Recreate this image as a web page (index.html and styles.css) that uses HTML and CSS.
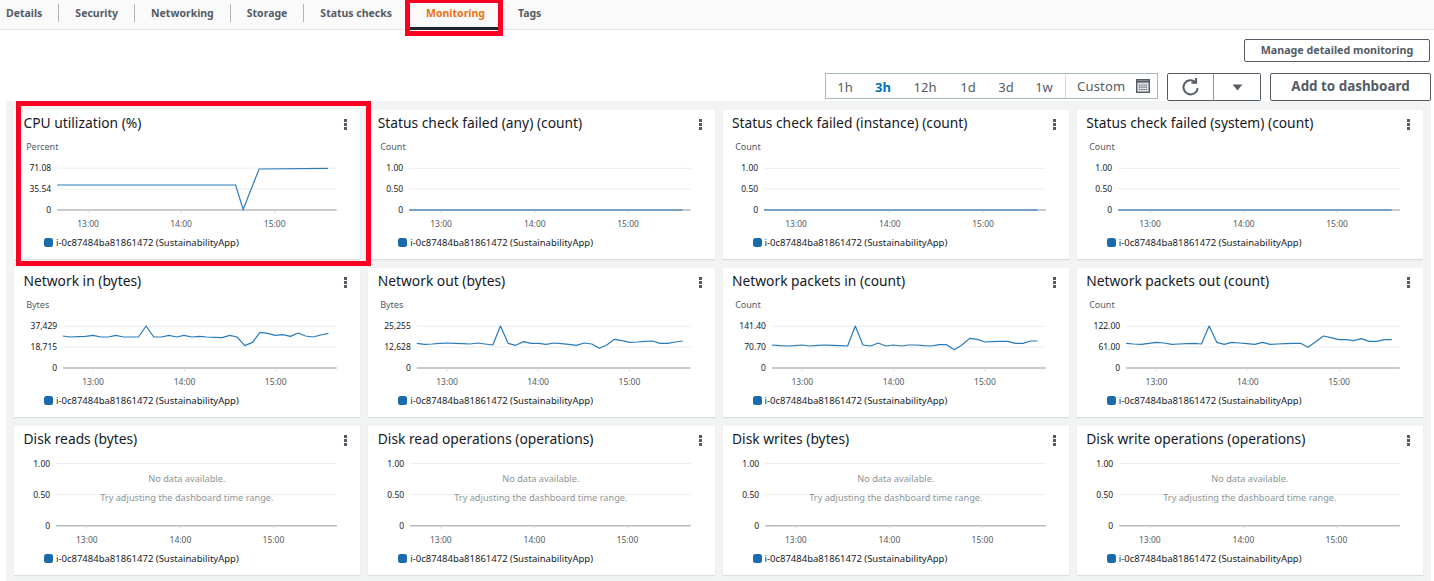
FILE: index.html
```html
<!DOCTYPE html>
<html lang="en">
<head>
<meta charset="utf-8">
<title>Monitoring</title>
<link rel="stylesheet" href="styles.css">
</head>
<body>
<nav class="tabs">
  <a class="tab first">Details</a>
  <a class="tab">Security</a>
  <a class="tab">Networking</a>
  <a class="tab">Storage</a>
  <a class="tab plain">Status checks</a>
  <a class="tab active">Monitoring</a>
  <a class="tab last">Tags</a>
</nav>
<div class="tab-mark"></div>
<section class="toolbar">
  <button class="btn manage">Manage detailed monitoring</button>
  <div class="controls">
    <div class="range">
      <span class="r r1">1h</span><span class="r r2 on">3h</span><span class="r r3">12h</span><span class="r r4">1d</span><span class="r r5">3d</span><span class="r r6">1w</span>
      <span class="custom">Custom
        <svg class="cal" viewBox="0 0 14 14"><rect class="cal-box" x="0.7" y="0.7" width="12.6" height="12.6"/><path class="cal-head" d="M1 2.6h12"/><path class="cal-dots" d="M3 6h8M3 8.2h8M3 10.5h8"/></svg>
      </span>
    </div>
    <div class="split">
      <button class="btn icon refresh"><svg viewBox="0 0 18 18"><path d="M15 10a6.4 6.4 0 1 1-2.2-5.6"/><path d="M13.6 1v4.2H9.4"/></svg></button>
      <button class="btn icon drop"><svg viewBox="0 0 12 8"><path class="fill" d="M0.5 0.5h11L6 7.5z"/></svg></button>
    </div>
    <button class="btn add">Add to dashboard</button>
  </div>
</section>
<main class="board">
  <div class="highlight"></div>

  <article class="card">
    <header class="head"><h3>CPU utilization (%)</h3><span class="dots"><i></i><i></i><i></i></span></header>
    <svg class="plot" viewBox="0 0 346 96">
      <text class="unit" x="12" y="9.5">Percent</text>
      <path class="grid" d="M43 28.2H322.5M43 49H322.5"/><path class="axis" d="M43 70H322.5"/><path class="tick" d="M74 70v3M167 70v3M260.6 70v3"/>
      <text class="yl" x="37" y="31">71.08</text><text class="yl" x="37" y="52">35.54</text><text class="yl" x="37" y="73">0</text>
      <text class="xl" x="74" y="87">13:00</text><text class="xl" x="167" y="87">14:00</text><text class="xl" x="260.6" y="87">15:00</text>
      <polyline class="line" points="43,45 221.5,45 229,69.5 245,29 314,28.3"/>
    </svg>
    <div class="legend"><span class="sw"></span>i-0c87484ba81861472 (SustainabilityApp)</div>
  </article>

  <article class="card">
    <header class="head"><h3>Status check failed (any) (count)</h3><span class="dots"><i></i><i></i><i></i></span></header>
    <svg class="plot" viewBox="0 0 346 96">
      <text class="unit" x="12" y="9.5">Count</text>
      <path class="grid" d="M41 28.3H322.7M41 49H322.7"/><path class="axis" d="M41 70H322.7"/><path class="tick" d="M73 70v3M166.7 70v3M260 70v3"/>
      <text class="yl" x="35" y="31">1.00</text><text class="yl" x="35" y="52">0.50</text><text class="yl" x="35" y="73">0</text>
      <text class="xl" x="73" y="87">13:00</text><text class="xl" x="166.7" y="87">14:00</text><text class="xl" x="260" y="87">15:00</text>
      <path class="flat" d="M41 70H314.5"/>
    </svg>
    <div class="legend"><span class="sw"></span>i-0c87484ba81861472 (SustainabilityApp)</div>
  </article>

  <article class="card">
    <header class="head"><h3>Status check failed (instance) (count)</h3><span class="dots"><i></i><i></i><i></i></span></header>
    <svg class="plot" viewBox="0 0 346 96">
      <text class="unit" x="12" y="9.5">Count</text>
      <path class="grid" d="M41 28.3H322.7M41 49H322.7"/><path class="axis" d="M41 70H322.7"/><path class="tick" d="M73 70v3M166.7 70v3M260 70v3"/>
      <text class="yl" x="35" y="31">1.00</text><text class="yl" x="35" y="52">0.50</text><text class="yl" x="35" y="73">0</text>
      <text class="xl" x="73" y="87">13:00</text><text class="xl" x="166.7" y="87">14:00</text><text class="xl" x="260" y="87">15:00</text>
      <path class="flat" d="M41 70H314.5"/>
    </svg>
    <div class="legend"><span class="sw"></span>i-0c87484ba81861472 (SustainabilityApp)</div>
  </article>

  <article class="card">
    <header class="head"><h3>Status check failed (system) (count)</h3><span class="dots"><i></i><i></i><i></i></span></header>
    <svg class="plot" viewBox="0 0 346 96">
      <text class="unit" x="12" y="9.5">Count</text>
      <path class="grid" d="M41 28.3H322.7M41 49H322.7"/><path class="axis" d="M41 70H322.7"/><path class="tick" d="M73 70v3M166.7 70v3M260 70v3"/>
      <text class="yl" x="35" y="31">1.00</text><text class="yl" x="35" y="52">0.50</text><text class="yl" x="35" y="73">0</text>
      <text class="xl" x="73" y="87">13:00</text><text class="xl" x="166.7" y="87">14:00</text><text class="xl" x="260" y="87">15:00</text>
      <path class="flat" d="M41 70H314.5"/>
    </svg>
    <div class="legend"><span class="sw"></span>i-0c87484ba81861472 (SustainabilityApp)</div>
  </article>

  <article class="card">
    <header class="head"><h3>Network in (bytes)</h3><span class="dots"><i></i><i></i><i></i></span></header>
    <svg class="plot" viewBox="0 0 346 96">
      <text class="unit" x="12" y="9.5">Bytes</text>
      <path class="grid" d="M49 28.3H322.5M49 49H322.5"/><path class="axis" d="M49 70H322.5"/><path class="tick" d="M79 70v3M170.5 70v3M261.6 70v3"/>
      <text class="yl" x="43" y="31">37,429</text><text class="yl" x="43" y="52">18,715</text><text class="yl" x="43" y="73">0</text>
      <text class="xl" x="79" y="87">13:00</text><text class="xl" x="170.5" y="87">14:00</text><text class="xl" x="261.6" y="87">15:00</text>
      <g transform="scale(.3333) translate(-42,-99)"><polyline class="line3" points="188,213 211,216 234,215 256,214 279,211 302,216 325,216 347,211 370,216 393,216 415,216 438,183 461,216 484,216 507,211 529,216 552,211 575,216 598,214 620,216 643,217 666,218 689,211 711,216 734,242 757,232 780,202 803,205 825,211 848,209 871,214 894,204 916,213 939,216 962,210 985,205"/></g>
    </svg>
    <div class="legend"><span class="sw"></span>i-0c87484ba81861472 (SustainabilityApp)</div>
  </article>

  <article class="card">
    <header class="head"><h3>Network out (bytes)</h3><span class="dots"><i></i><i></i><i></i></span></header>
    <svg class="plot" viewBox="0 0 346 96">
      <text class="unit" x="12" y="9.5">Bytes</text>
      <path class="grid" d="M48.7 28.3H322.3M48.7 49H322.3"/><path class="axis" d="M48.7 70H322.3"/><path class="tick" d="M79 70v3M170 70v3M261.3 70v3"/>
      <text class="yl" x="42.7" y="31">25,255</text><text class="yl" x="42.7" y="52">12,628</text><text class="yl" x="42.7" y="73">0</text>
      <text class="xl" x="79" y="87">13:00</text><text class="xl" x="170" y="87">14:00</text><text class="xl" x="261.3" y="87">15:00</text>
      <g transform="scale(.3333) translate(5,-99)"><polyline class="line3" points="141,235 164,238 187,237 209,235 232,234 255,235 278,236 301,237 323,234 346,237 369,240 392,183 415,235 438,241 461,230 484,235 507,235 529,238 552,234 575,236 597,238 620,241 643,234 666,237 689,250 711,240 734,223 757,227 780,232 803,231 825,229 848,228 871,235 894,235 917,231 939,228"/></g>
    </svg>
    <div class="legend"><span class="sw"></span>i-0c87484ba81861472 (SustainabilityApp)</div>
  </article>

  <article class="card">
    <header class="head"><h3>Network packets in (count)</h3><span class="dots"><i></i><i></i><i></i></span></header>
    <svg class="plot" viewBox="0 0 346 96">
      <text class="unit" x="12" y="9.5">Count</text>
      <path class="grid" d="M48.8 28.3H322.5M48.8 49H322.5"/><path class="axis" d="M48.8 70H322.5"/><path class="tick" d="M79.2 70v3M170.5 70v3M261.8 70v3"/>
      <text class="yl" x="42.8" y="31">141.40</text><text class="yl" x="42.8" y="52">70.70</text><text class="yl" x="42.8" y="73">0</text>
      <text class="xl" x="79.2" y="87">13:00</text><text class="xl" x="170.5" y="87">14:00</text><text class="xl" x="261.8" y="87">15:00</text>
      <g transform="scale(.3333) translate(7.5,-99)"><polyline class="line3" points="139,240 162,242 185,243 207,242 230,240 253,243 276,241 298,240 321,241 344,242 366,243 389,183 412,240 435,243 458,234 481,243 504,240 527,243 549,240 572,240 595,242 618,243 640,239 663,239 686,254 709,240 732,220 755,223 778,231 800,230 823,229 846,229 869,235 892,235 915,228 936,228"/></g>
    </svg>
    <div class="legend"><span class="sw"></span>i-0c87484ba81861472 (SustainabilityApp)</div>
  </article>

  <article class="card">
    <header class="head"><h3>Network packets out (count)</h3><span class="dots"><i></i><i></i><i></i></span></header>
    <svg class="plot" viewBox="0 0 346 96">
      <text class="unit" x="12" y="9.5">Count</text>
      <path class="grid" d="M49 28.3H322.5M49 49H322.5"/><path class="axis" d="M49 70H322.5"/><path class="tick" d="M79.3 70v3M170.7 70v3M262 70v3"/>
      <text class="yl" x="43" y="31">122.00</text><text class="yl" x="43" y="52">61.00</text><text class="yl" x="43" y="73">0</text>
      <text class="xl" x="79.3" y="87">13:00</text><text class="xl" x="170.7" y="87">14:00</text><text class="xl" x="262" y="87">15:00</text>
      <g transform="scale(.3333) translate(10,-99)"><polyline class="line3" points="137,235 160,237 183,238 205,235 228,232 251,234 274,238 296,237 319,236 342,235 363,237 386,183 409,232 431,238 454,232 477,234 500,236 523,238 546,232 569,238 592,237 614,236 637,235 660,235 683,247 706,230 729,213 752,218 775,224 797,224 820,227 843,221 866,229 889,229 912,224 934,224"/></g>
    </svg>
    <div class="legend"><span class="sw"></span>i-0c87484ba81861472 (SustainabilityApp)</div>
  </article>

  <article class="card">
    <header class="head"><h3>Disk reads (bytes)</h3><span class="dots"><i></i><i></i><i></i></span></header>
    <svg class="plot" viewBox="0 0 346 96">
      <path class="grid" d="M42 7.5H322.7M42 38.7H322.7"/><path class="axis" d="M42 69.7H322.7"/><path class="tick" d="M72.7 69.7v3M166.3 69.7v3M259.3 69.7v3"/>
      <text class="yl" x="36" y="10.5">1.00</text><text class="yl" x="36" y="41.7">0.50</text><text class="yl" x="36" y="72.7">0</text>
      <text class="xl" x="72.7" y="87">13:00</text><text class="xl" x="166.3" y="87">14:00</text><text class="xl" x="259.3" y="87">15:00</text>
      <text class="none" x="172.7" y="26">No data available.</text><text class="none" x="172.7" y="45">Try adjusting the dashboard time range.</text>
    </svg>
    <div class="legend"><span class="sw"></span>i-0c87484ba81861472 (SustainabilityApp)</div>
  </article>

  <article class="card">
    <header class="head"><h3>Disk read operations (operations)</h3><span class="dots"><i></i><i></i><i></i></span></header>
    <svg class="plot" viewBox="0 0 346 96">
      <path class="grid" d="M42 7.5H322.7M42 38.7H322.7"/><path class="axis" d="M42 69.7H322.7"/><path class="tick" d="M72.7 69.7v3M166.3 69.7v3M259.3 69.7v3"/>
      <text class="yl" x="36" y="10.5">1.00</text><text class="yl" x="36" y="41.7">0.50</text><text class="yl" x="36" y="72.7">0</text>
      <text class="xl" x="72.7" y="87">13:00</text><text class="xl" x="166.3" y="87">14:00</text><text class="xl" x="259.3" y="87">15:00</text>
      <text class="none" x="172.7" y="26">No data available.</text><text class="none" x="172.7" y="45">Try adjusting the dashboard time range.</text>
    </svg>
    <div class="legend"><span class="sw"></span>i-0c87484ba81861472 (SustainabilityApp)</div>
  </article>

  <article class="card">
    <header class="head"><h3>Disk writes (bytes)</h3><span class="dots"><i></i><i></i><i></i></span></header>
    <svg class="plot" viewBox="0 0 346 96">
      <path class="grid" d="M42 7.5H322.7M42 38.7H322.7"/><path class="axis" d="M42 69.7H322.7"/><path class="tick" d="M72.7 69.7v3M166.3 69.7v3M259.3 69.7v3"/>
      <text class="yl" x="36" y="10.5">1.00</text><text class="yl" x="36" y="41.7">0.50</text><text class="yl" x="36" y="72.7">0</text>
      <text class="xl" x="72.7" y="87">13:00</text><text class="xl" x="166.3" y="87">14:00</text><text class="xl" x="259.3" y="87">15:00</text>
      <text class="none" x="172.7" y="26">No data available.</text><text class="none" x="172.7" y="45">Try adjusting the dashboard time range.</text>
    </svg>
    <div class="legend"><span class="sw"></span>i-0c87484ba81861472 (SustainabilityApp)</div>
  </article>

  <article class="card">
    <header class="head"><h3>Disk write operations (operations)</h3><span class="dots"><i></i><i></i><i></i></span></header>
    <svg class="plot" viewBox="0 0 346 96">
      <path class="grid" d="M42 7.5H322.7M42 38.7H322.7"/><path class="axis" d="M42 69.7H322.7"/><path class="tick" d="M72.7 69.7v3M166.3 69.7v3M259.3 69.7v3"/>
      <text class="yl" x="36" y="10.5">1.00</text><text class="yl" x="36" y="41.7">0.50</text><text class="yl" x="36" y="72.7">0</text>
      <text class="xl" x="72.7" y="87">13:00</text><text class="xl" x="166.3" y="87">14:00</text><text class="xl" x="259.3" y="87">15:00</text>
      <text class="none" x="172.7" y="26">No data available.</text><text class="none" x="172.7" y="45">Try adjusting the dashboard time range.</text>
    </svg>
    <div class="legend"><span class="sw"></span>i-0c87484ba81861472 (SustainabilityApp)</div>
  </article>
</main>
</body>
</html>
```
FILE: styles.css
```css
* { box-sizing: border-box; }
html, body { margin: 0; padding: 0; }
body {
  position: relative;
  width: 1434px;
  height: 581px;
  overflow: hidden;
  background: #fff;
  font-family: "Noto Sans", "Open Sans", sans-serif;
  color: #16191f;
}
.tabs {
  display: flex;
  height: 30px;
  background: #fafafa;
  border-bottom: 1px solid #e6e7e7;
  padding-top: 4px;
}
.tab {
  display: flex;
  align-items: center;
  height: 18px;
  padding: 0 16px;
  font-size: 10.5px;
  font-weight: 700;
  color: #545b64;
  border-right: 1px solid #aab7b8;
}
.tab.first { padding-left: 6px; }
.tab.plain { border-right: 0; }
.tab.active { color: #ec7211; border-right: 0; padding: 0 17px 0 18px; }
.tab.last { border-right: 0; }
.tab-mark {
  position: absolute;
  left: 405px;
  top: 0;
  width: 98px;
  height: 36px;
  border: 5px solid #fe0022;
  border-top-width: 3px;
  z-index: 2;
}
.tab-mark::after {
  content: "";
  position: absolute;
  left: 0;
  right: 0;
  top: 24px;
  height: 3px;
  background: #232529;
}
.toolbar {
  height: 71px;
  padding: 9px 4px 0 0;
  display: flex;
  flex-direction: column;
  align-items: flex-end;
  gap: 11px;
  position: relative;
  z-index: 1;
}
.btn {
  font-family: inherit;
  font-weight: 700;
  color: #545b64;
  background: #fff;
  border: 1px solid #545b64;
  border-radius: 2px;
  padding: 0;
}
.manage {
  width: 186px;
  height: 23px;
  font-size: 10.7px;
  padding-bottom: 2px;
}
.controls { display: flex; align-items: flex-start; margin-right: -1px; }
.range {
  display: flex;
  align-items: center;
  width: 333px;
  height: 26px;
  margin-right: 9px;
  border: 1px solid #aab7b8;
  background: #fff;
  font-size: 13px;
  color: #545b64;
  padding: 1px 0 0;
}
.r { width: 38px; text-align: center; }
.on { color: #0073bb; font-weight: 700; }
.r3 { width: 46px; }
.r4 { width: 40px; }
.r5 { width: 36px; }
.r6 { width: 40px; }
.custom {
  display: flex;
  align-items: center;
  gap: 11px;
  height: 24px;
  margin-left: 1px;
  margin-top: -1px;
  padding-left: 11px;
  border-left: 1px solid #d5dbdb;
  letter-spacing: .2px;
}
.cal { width: 14px; height: 14px; }
.cal-box { fill: #dfe2e4; stroke: #545b64; stroke-width: 1.4; }
.cal-head { fill: none; stroke: #545b64; stroke-width: 2; }
.cal-dots { fill: none; stroke: #545b64; stroke-width: 1.2; stroke-dasharray: 1.3 .9; }
.split { display: flex; margin-right: 9px; }
.icon {
  display: flex;
  align-items: center;
  justify-content: center;
  height: 28px;
}
.refresh { width: 47px; border-radius: 2px 0 0 2px; }
.refresh svg { width: 20px; height: 20px; }
.refresh path { fill: none; stroke: #545b64; stroke-width: 1.8; }
.drop { width: 48px; margin-left: -1px; border-radius: 0 2px 2px 0; border-left-color: #8d9596; }
.drop svg { width: 11px; height: 7px; }
.drop .fill { fill: #545b64; }
.add { width: 161px; height: 28px; font-size: 13.4px; padding-bottom: 2px; }
.board {
  position: relative;
  margin-left: 6px;
  width: 1425px;
  height: 480px;
  background: #f2f3f3;
  padding: 9px 8px 0;
  display: grid;
  grid-template-columns: repeat(4, 1fr);
  grid-auto-rows: 149px;
  gap: 9px 8px;
}
.highlight {
  position: absolute;
  left: 10px;
  top: 0;
  width: 355px;
  height: 165px;
  border: 5px solid #fe0022;
  z-index: 2;
  pointer-events: none;
}
.card {
  background: #fff;
  box-shadow: 0 1px 1px rgba(0, 28, 36, .1);
  display: flex;
  flex-direction: column;
  min-width: 0;
}
.head {
  height: 30px;
  padding: 3px 10px 0 9.5px;
  display: flex;
  justify-content: space-between;
  align-items: flex-start;
}
.head h3 {
  margin: 0;
  font-size: 13.8px;
  line-height: 19px;
  font-weight: 400;
  color: #16191f;
}
.dots {
  display: flex;
  flex-direction: column;
  gap: 1.5px;
  margin: 6px 3px 0 0;
}
.dots i { display: block; width: 3px; height: 2.5px; background: #545b64; }
.plot { display: block; width: 100%; height: 96px; flex: none; }
.plot text { font-family: "Noto Sans", "Open Sans", sans-serif; font-size: 8.5px; fill: #545b64; }
.plot .unit { font-size: 9px; }
.plot .yl { text-anchor: end; fill: #16191f; }
.plot .xl { text-anchor: middle; }
.plot .none { text-anchor: middle; fill: #8d9596; font-size: 9.2px; }
.grid { stroke: #ecedee; stroke-width: 1; fill: none; }
.axis { stroke: #b5babf; stroke-width: 1.5; fill: none; }
.tick { stroke: #d5dbdb; stroke-width: 1; fill: none; }
.line { fill: none; stroke: #2a7ab8; stroke-width: 1.2; }
.line3 { fill: none; stroke: #2a7ab8; stroke-width: 3.6; stroke-linejoin: round; }
.flat { stroke: #5b93c0; stroke-width: 1.6; fill: none; }
.legend {
  display: flex;
  align-items: center;
  height: 13px;
  padding-left: 30px;
  font-size: 9.5px;
  color: #16191f;
  white-space: nowrap;
}
.sw {
  width: 9px;
  height: 9px;
  margin-right: 3px;
  border-radius: 2.5px;
  background: #1a6bad;
}
```
